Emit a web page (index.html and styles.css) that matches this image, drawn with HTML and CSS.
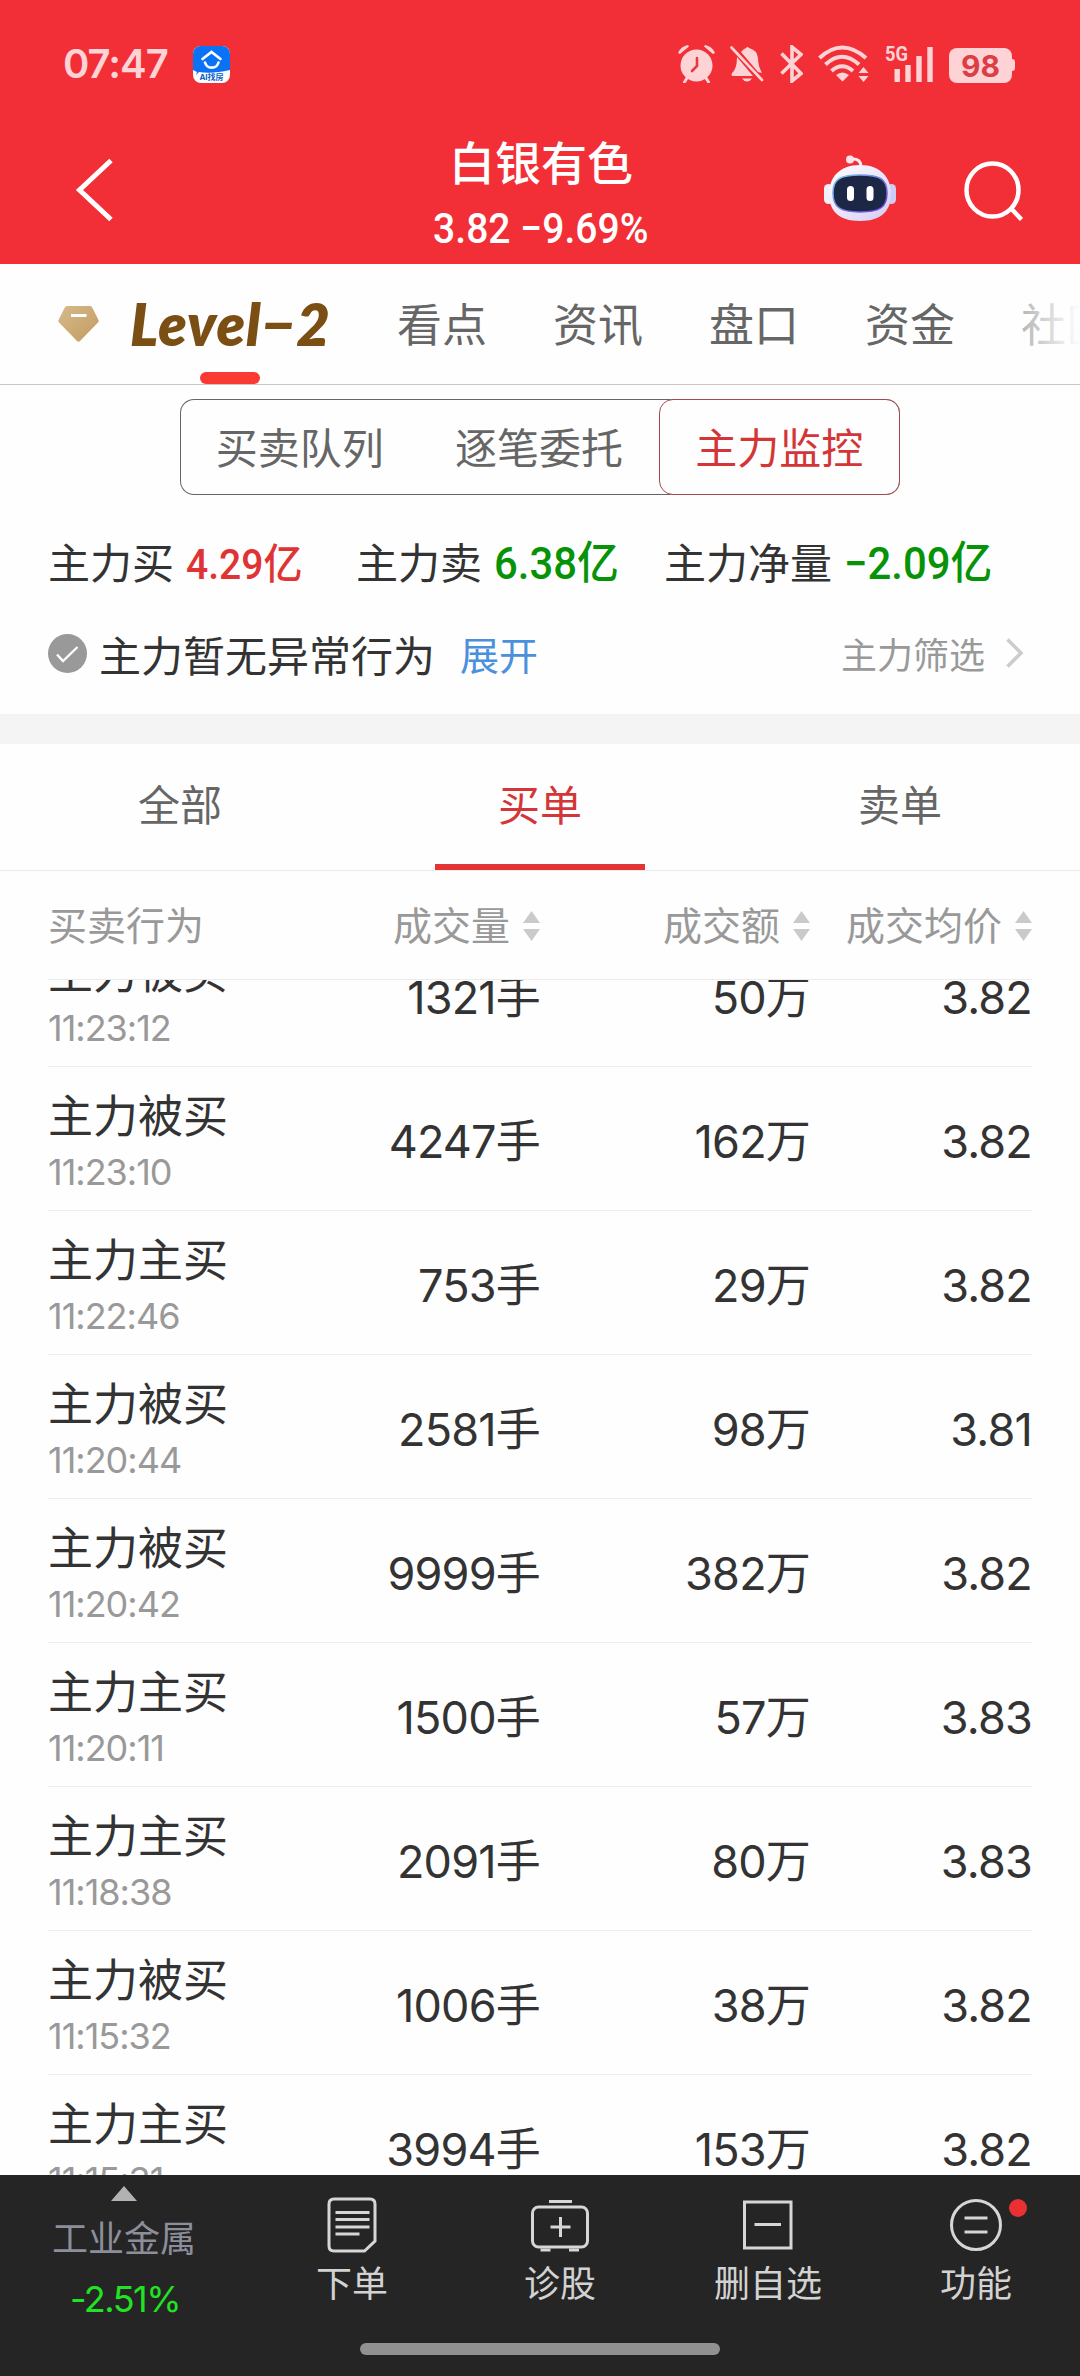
FILE: index.html
```html
<!DOCTYPE html>
<html lang="zh-CN">
<head>
    <meta charset="UTF-8">
    <meta name="viewport" content="width=device-width, initial-scale=1.0">
    <title>白银有色 - 主力监控</title>
    <link rel="stylesheet" href="styles.css">
</head>
<body>
    <header class="top">
        <div class="status-bar">
            <span class="clock">07:47</span>
            <svg class="app-badge" width="37" height="37" viewBox="0 0 37 37">
                <rect width="37" height="37" rx="8" fill="#fff"/>
                <path d="M0 24V8a8 8 0 0 1 8-8h21a8 8 0 0 1 8 8v16q-18 4-31 2l-3 3 1-3z" fill="#0a72f5"/>
                <path d="M9.500 13L18.500 6l9 7M12 16.500a7 7 0 0 0 13.500 0" fill="none" stroke="#fff" stroke-width="2.600" stroke-linecap="round"/>
                <text x="18.500" y="34" text-anchor="middle" class="badge-text">AI找房</text>
            </svg>
            <div class="status-icons">
                <!-- alarm -->
                <svg width="37" height="38" viewBox="0 0 37 38">
                    <path d="M0 8Q3 1 10 0l1 1.500L2 9zM37 8Q34 1 27 0l-1 1.500L35 9z" fill="#fdd3d6"/>
                    <circle cx="18.500" cy="20.500" r="16" fill="#fdd3d6"/>
                    <path d="M9 33l-2.500 4M28 33l2.500 4" stroke="#fdd3d6" stroke-width="3" stroke-linecap="round"/>
                    <path d="M19 13v8l-5 5" fill="none" stroke="#e63a42" stroke-width="2.600" stroke-linecap="round"/>
                </svg>
                <!-- muted bell -->
                <svg width="34" height="38" viewBox="0 0 34 38">
                    <path d="M11 7Q14 3.500 16 3q1.500-2 3 0Q27 5 28 13q0 8 4 15l-4-1zM7 12L23 31H2q-1-1.500 0-3 5-4 5-16zM12 33.500h10q-2 3-5 3t-5-3z" fill="#fdd3d6"/>
                    <path d="M1.500 2.500L32 35" stroke="#fdd3d6" stroke-width="2.600" stroke-linecap="round"/>
                </svg>
                <!-- bluetooth -->
                <svg width="23" height="38" viewBox="0 0 23 38">
                    <path d="M1.500 8.500L21 28.500 12 36V2l9 7.500L1.500 28.500" fill="none" stroke="#fdd3d6" stroke-width="3.600"/>
                </svg>
                <!-- wifi -->
                <svg width="51" height="38" viewBox="0 0 51 38">
                    <path d="M1.500 13Q24-8 48 13M7.500 19.500Q24 4 41 19.500M13.500 26Q24 16.500 35 26" fill="none" stroke="#fdd3d6" stroke-width="4"/>
                    <path d="M18 30q6.500-5 13 0l-6.500 6.500zM40.500 28l5-6 5 6zM40.500 31h10l-5 6z" fill="#fdd3d6"/>
                </svg>
                <!-- mobile signal -->
                <svg class="signal" width="48" height="38" viewBox="0 0 48 38">
                    <text x="0" y="16" class="net-text" textLength="23" lengthAdjust="spacingAndGlyphs">5G</text>
                    <path d="M12.200 24v13M23 20v17M34 11v26M45 2v35" stroke="#fdd3d6" stroke-width="5.400"/>
                </svg>
                <div class="battery">98</div>
            </div>
        </div>
        <div class="title-bar">
            <button class="icon-btn back" aria-label="返回">
                <svg width="40" height="66" viewBox="0 0 40 66">
                    <path d="M37 3.500L5.500 33 37 62.500" fill="none" stroke="#fff" stroke-width="5"/>
                </svg>
            </button>
            <div class="stock">
                <h1>白银有色</h1>
                <p class="quote">3.82 −9.69%</p>
            </div>
            <div class="title-actions">
                <svg class="robot" width="72" height="67" viewBox="0 0 72 67">
                    <defs>
                        <linearGradient id="shell" x1="0" y1="0" x2="1" y2="1">
                            <stop offset="0" stop-color="#ffffff"/>
                            <stop offset="0.700" stop-color="#e2dcf8"/>
                            <stop offset="1" stop-color="#cfc8f3"/>
                        </linearGradient>
                        <linearGradient id="rim" x1="0" y1="0" x2="1" y2="1">
                            <stop offset="0" stop-color="#7fc8ee"/>
                            <stop offset="1" stop-color="#6a35d8"/>
                        </linearGradient>
                    </defs>
                    <path d="M27 4q10-1 10 8" fill="none" stroke="#fbe9f0" stroke-width="3"/>
                    <circle cx="26" cy="4.500" r="4" fill="#fbe3ea"/>
                    <rect x="0" y="29" width="9" height="20" rx="4.500" fill="#eef0fc"/>
                    <rect x="63" y="29" width="9" height="20" rx="4.500" fill="#cdcdf3"/>
                    <path d="M36 10C57 10 67 23 67 39S58 66 36 66 5 55 5 39 15 10 36 10z" fill="url(#shell)"/>
                    <path d="M36 20c20 0 27 4 27 18s-7 19-27 19S9 52 9 38s7-18 27-18z" fill="#1c2746" stroke="url(#rim)" stroke-width="1.500"/>
                    <rect x="23" y="31" width="7" height="15" rx="3.500" fill="#fff"/>
                    <rect x="42.500" y="31" width="7" height="15" rx="3.500" fill="#fff"/>
                </svg>
                <svg width="60" height="60" viewBox="0 0 60 60">
                    <ellipse cx="28.500" cy="29" rx="26" ry="26.500" fill="none" stroke="#fff" stroke-width="4.500"/>
                    <path d="M47 47.500l10.500 11" stroke="#fff" stroke-width="4.500"/>
                </svg>
            </div>
        </div>
    </header>

    <nav class="main-tabs">
        <svg class="diamond" width="41" height="36" viewBox="0 0 41 36">
            <defs>
                <linearGradient id="gold" x1="0" y1="0" x2="1" y2="1">
                    <stop offset="0" stop-color="#d6b98c"/>
                    <stop offset="1" stop-color="#c39c60"/>
                </linearGradient>
            </defs>
            <path d="M9 0h23q1.500 0 2.500 2l6 12q.5 1.500-.5 2.500L22 35q-1.500 1.500-3 0L1 16.500q-1-1-.5-2.500l6-12Q7.500 0 9 0z" fill="url(#gold)"/>
            <path d="M13 9.500h15.500" stroke="#fff" stroke-width="3"/>
        </svg>
        <a class="level2" href="#">Level−2</a>
        <a href="#">看点</a>
        <a href="#">资讯</a>
        <a href="#">盘口</a>
        <a href="#">资金</a>
        <a href="#">社区</a>
    </nav>

    <section class="summary">
        <div class="segment">
            <button>买卖队列</button>
            <button>逐笔委托</button>
            <button class="active">主力监控</button>
        </div>
        <div class="totals">
            <div>主力买<b class="up">4.29亿</b></div>
            <div>主力卖<b class="down">6.38亿</b></div>
            <div>主力净量<b class="down">−2.09亿</b></div>
        </div>
        <div class="notice">
            <svg width="39" height="39" viewBox="0 0 39 39">
                <circle cx="19.500" cy="19.500" r="19.500" fill="#999"/>
                <path d="M9 20.500l6 6.500 14.500-14" fill="none" stroke="#fff" stroke-width="2.400"/>
            </svg>
            <span class="notice-text">主力暂无异常行为</span>
            <a class="expand" href="#">展开</a>
            <a class="filter" href="#">主力筛选
                <svg width="18" height="30" viewBox="0 0 18 30">
                    <path d="M1.500 1.500L15 15 1.500 28.500" fill="none" stroke="#ccc" stroke-width="3.600"/>
                </svg>
            </a>
        </div>
    </section>

    <div class="order-tabs">
        <button>全部</button>
        <button class="active">买单</button>
        <button>卖单</button>
    </div>

    <main class="orders">
        <div class="order-head">
            <span>买卖行为</span>
            <span class="sort">成交量</span>
            <span class="sort">成交额</span>
            <span class="sort">成交均价</span>
        </div>
        <div class="order-view">
            <ul class="order-list">
                <li><div class="act">主力被买<time>11:23:12</time></div><span>1321手</span><span>50万</span><span>3.82</span></li>
                <li><div class="act">主力被买<time>11:23:10</time></div><span>4247手</span><span>162万</span><span>3.82</span></li>
                <li><div class="act">主力主买<time>11:22:46</time></div><span>753手</span><span>29万</span><span>3.82</span></li>
                <li><div class="act">主力被买<time>11:20:44</time></div><span>2581手</span><span>98万</span><span>3.81</span></li>
                <li><div class="act">主力被买<time>11:20:42</time></div><span>9999手</span><span>382万</span><span>3.82</span></li>
                <li><div class="act">主力主买<time>11:20:11</time></div><span>1500手</span><span>57万</span><span>3.83</span></li>
                <li><div class="act">主力主买<time>11:18:38</time></div><span>2091手</span><span>80万</span><span>3.83</span></li>
                <li><div class="act">主力被买<time>11:15:32</time></div><span>1006手</span><span>38万</span><span>3.82</span></li>
                <li><div class="act">主力主买<time>11:15:31</time></div><span>3994手</span><span>153万</span><span>3.82</span></li>
            </ul>
        </div>
    </main>

    <footer class="bottom-bar">
        <div class="bottom-items">
            <a class="sector" href="#">
                <i class="caret"></i>
                <span class="sector-name">工业金属</span>
                <span class="sector-change">-2.51%</span>
            </a>
            <a class="tool" href="#">
                <svg width="60" height="56" viewBox="0 0 60 56">
                    <path d="M12 2h36q5 0 5 5v37L42.500 54H12q-5 0-5-5V7q0-5 5-5z"/>
                    <path d="M13.500 15.500h34M13.500 22.500h34M13.500 30h34M13.500 37h24"/>
                </svg>
                下单
            </a>
            <a class="tool" href="#">
                <svg width="60" height="56" viewBox="0 0 60 56">
                    <rect x="2.500" y="10" width="55" height="40" rx="6"/>
                    <path d="M19 4.500h23M30.500 20v20M20.500 30h20M10.500 53h10M39 53h10"/>
                </svg>
                诊股
            </a>
            <a class="tool" href="#">
                <svg width="60" height="56" viewBox="0 0 60 56">
                    <rect x="6.500" y="5" width="46.500" height="46"/>
                    <path d="M16.500 27.500h26.500"/>
                </svg>
                删自选
            </a>
            <a class="tool has-dot" href="#">
                <svg width="60" height="56" viewBox="0 0 60 56">
                    <circle cx="30" cy="28" r="24.500"/>
                    <path d="M18.500 21h23M18.500 35h23"/>
                </svg>
                功能
            </a>
        </div>
        <div class="home-bar"></div>
    </footer>
</body>
</html>
```

FILE: styles.css
```css
:root {
    --red: #f22f37;
    --up: #e03434;
    --down: #079307;
    --text: #333333;
    --text-mid: #666666;
    --text-light: #999999;
    --line: #ebebeb;
}

* {
    box-sizing: border-box;
}

body {
    margin: 0;
    width: 1080px;
    height: 2376px;
    overflow: hidden;
    display: flex;
    flex-direction: column;
    background-color: #fefefe;
    color: var(--text);
    font-family: Inter, "Noto Sans CJK SC", sans-serif;
    font-size: 42px;
}

a {
    color: inherit;
    text-decoration: none;
}

button {
    padding: 0;
    border: none;
    background: none;
    color: inherit;
    font: inherit;
}

svg {
    display: block;
    flex: none;
}

/* Red header */
.top {
    height: 264px;
    background-color: var(--red);
    color: #fff;
}

.status-bar {
    display: flex;
    align-items: center;
    height: 128px;
    padding: 0 65px 0 63px;
}

.clock {
    width: 130px;
    margin-top: -1px;
    font-size: 40px;
    font-weight: 600;
    letter-spacing: -1px;
    color: #fdd3d6;
}

.app-badge {
    margin-top: 1px;
}

.badge-text {
    font-size: 8px;
    font-weight: 700;
    fill: #0a62c8;
}

.status-icons {
    display: flex;
    align-items: center;
    gap: 15.5px;
    margin-left: auto;
}

.net-text {
    font-family: Roboto, sans-serif;
    font-size: 21px;
    font-weight: 700;
    fill: #fdd3d6;
}

.battery {
    position: relative;
    width: 63px;
    height: 35px;
    margin: 2px 3px 0 1px;
    border-radius: 8px;
    background-color: #fdd3d6;
    color: #dd3d45;
    font-size: 30px;
    font-weight: 700;
    line-height: 36px;
    text-align: center;
}

.battery::after {
    content: "";
    position: absolute;
    top: 11px;
    right: -3px;
    width: 3px;
    height: 12px;
    border-radius: 0 3px 3px 0;
    background-color: #fdd3d6;
}

.title-bar {
    display: grid;
    grid-template-columns: 1fr auto 1fr;
    height: 136px;
    padding: 2px 56px 0 74px;
}

.back {
    height: 120px;
    display: flex;
    align-items: center;
}

.stock {
    text-align: center;
    margin-left: -16px;
}

.stock h1 {
    margin: 0;
    font-size: 46px;
    font-weight: 500;
    line-height: 66px;
}

.quote {
    margin: 0;
    font-family: Roboto, sans-serif;
    font-size: 42px;
    font-weight: 500;
    line-height: 66px;
    transform: scaleX(0.93);
}

.title-actions {
    display: flex;
    align-items: center;
    justify-content: flex-end;
    gap: 68px;
    height: 122px;
}

.robot {
    margin-top: -5px;
}

/* Main tabs */
.main-tabs {
    position: relative;
    display: flex;
    align-items: center;
    gap: 66px;
    height: 121px;
    padding-left: 58px;
    border-bottom: 1px solid #c8c8c8;
    overflow: hidden;
    white-space: nowrap;
    font-size: 45px;
    line-height: 123px;
    color: var(--text-mid);
}

.main-tabs a {
    height: 120px;
}

.main-tabs::after {
    content: "";
    position: absolute;
    top: 0;
    right: 0;
    width: 100px;
    height: 119px;
    background: linear-gradient(to right, rgba(254, 254, 254, 0.2), #fefefe);
}

.main-tabs .level2 {
    position: relative;
    width: 207px;
    margin-left: -35px;
    font-family: Lato, sans-serif;
    font-size: 58px;
    font-style: italic;
    font-weight: 800;
    line-height: 120px;
    letter-spacing: 1px;
    color: #7b4f14;
}

.level2::after {
    content: "";
    position: absolute;
    left: 70px;
    bottom: 0;
    width: 60px;
    height: 12px;
    border-radius: 6px;
    background-color: #fa3b33;
}

/* Summary */
.summary {
    height: 359px;
    padding: 14px 48px 0;
    border-bottom: 30px solid #f4f4f4;
}

.segment {
    display: flex;
    width: 720px;
    height: 96px;
    margin: 0 auto;
    border-radius: 14px;
    box-shadow: inset 0 0 0 1px var(--text-mid);
    color: var(--text-mid);
}

.segment button {
    flex: 1;
    padding-bottom: 3px;
}

.segment .active {
    border: 1px solid #a9484a;
    border-radius: 14px;
    background-color: #fefefe;
    color: #d43638;
}

.totals {
    display: grid;
    grid-template-columns: 308px 308px 1fr;
    margin-top: 34px;
    line-height: 70px;
    white-space: nowrap;
}

.totals b {
    display: inline-block;
    margin-left: 12px;
    font-family: Roboto, "Noto Sans CJK SC", sans-serif;
    font-weight: 500;
    transform: scaleX(0.93);
    transform-origin: left;
}

.totals .up {
    color: var(--up);
}

.totals .down {
    font-size: 45px;
    color: var(--down);
}

.notice {
    display: flex;
    align-items: center;
    height: 60px;
    margin-top: 23px;
}

.notice-text {
    margin-left: 12px;
}

.expand {
    margin-left: 25px;
    font-size: 39px;
    color: #4a90dd;
}

.filter {
    display: flex;
    align-items: center;
    gap: 21px;
    margin-left: auto;
    margin-right: 8px;
    font-size: 36px;
    color: var(--text-light);
}

/* Order filter tabs */
.order-tabs {
    display: flex;
    height: 127px;
    border-bottom: 1px solid var(--line);
    color: var(--text-mid);
}

.order-tabs button {
    position: relative;
    flex: 1;
    padding-bottom: 10px;
}

.order-tabs .active {
    color: #d43638;
}

.order-tabs .active::after {
    content: "";
    position: absolute;
    left: 75px;
    right: 75px;
    bottom: 0;
    height: 6px;
    background-color: #e23435;
}

/* Order table */
.orders {
    padding: 0 48px;
}

.order-head,
.order-list li {
    display: grid;
    grid-template-columns: 200px 292px 270px 222px;
    border-bottom: 1px solid var(--line);
}

.order-head {
    height: 109px;
    line-height: 110px;
    font-size: 39px;
    color: var(--text-light);
}

.sort {
    display: flex;
    align-items: center;
    justify-content: flex-end;
    gap: 13px;
    white-space: nowrap;
}

.sort::after {
    content: "";
    width: 17px;
    height: 30px;
    background-color: #cacaca;
    clip-path: polygon(50% 0, 100% 40%, 0 40%, 0 60%, 100% 60%, 50% 100%, 0 60%, 0 40%);
}

.order-view {
    height: 1195px;
    overflow: hidden;
}

/* list is scrolled part of the way through its first row */
.order-list {
    margin: -57px 0 0;
    padding: 0;
    list-style: none;
}

.order-list li {
    height: 144px;
    font-size: 45px;
}

.order-list span {
    line-height: 149px;
    letter-spacing: -0.8px;
    text-align: right;
}

.act {
    padding-top: 20px;
    line-height: 60px;
}

.act time {
    display: block;
    font-size: 36px;
    line-height: 50px;
    letter-spacing: -1px;
    color: var(--text-light);
}

/* Bottom bar */
.bottom-bar {
    flex: none;
    height: 201px;
    background-color: #252525;
    color: #d2d2d2;
    font-size: 36px;
}

.bottom-items {
    display: flex;
    height: 168px;
}

.sector {
    width: 248px;
    display: flex;
    flex-direction: column;
    align-items: center;
    padding-top: 11px;
}

.caret {
    border: 13px solid transparent;
    border-top: none;
    border-bottom: 15px solid #b2b2b2;
}

.sector-name {
    margin-top: 8px;
    line-height: 60px;
    color: #8c8e9b;
}

.sector-change {
    margin-left: 2px;
    line-height: 60px;
    color: #22e322;
    letter-spacing: -1.5px;
}

.tool {
    position: relative;
    flex: 1;
    display: flex;
    flex-direction: column;
    align-items: center;
    padding-top: 22px;
    line-height: 62px;
}

.tool svg {
    fill: none;
    stroke: #d6d6d6;
    stroke-width: 3;
}

.has-dot::after {
    content: "";
    position: absolute;
    top: 24px;
    right: 53px;
    width: 18px;
    height: 18px;
    border-radius: 50%;
    background-color: #ea3030;
}

.home-bar {
    width: 360px;
    height: 12px;
    margin: 0 auto;
    border-radius: 6px;
    background-color: #919191;
}
```
